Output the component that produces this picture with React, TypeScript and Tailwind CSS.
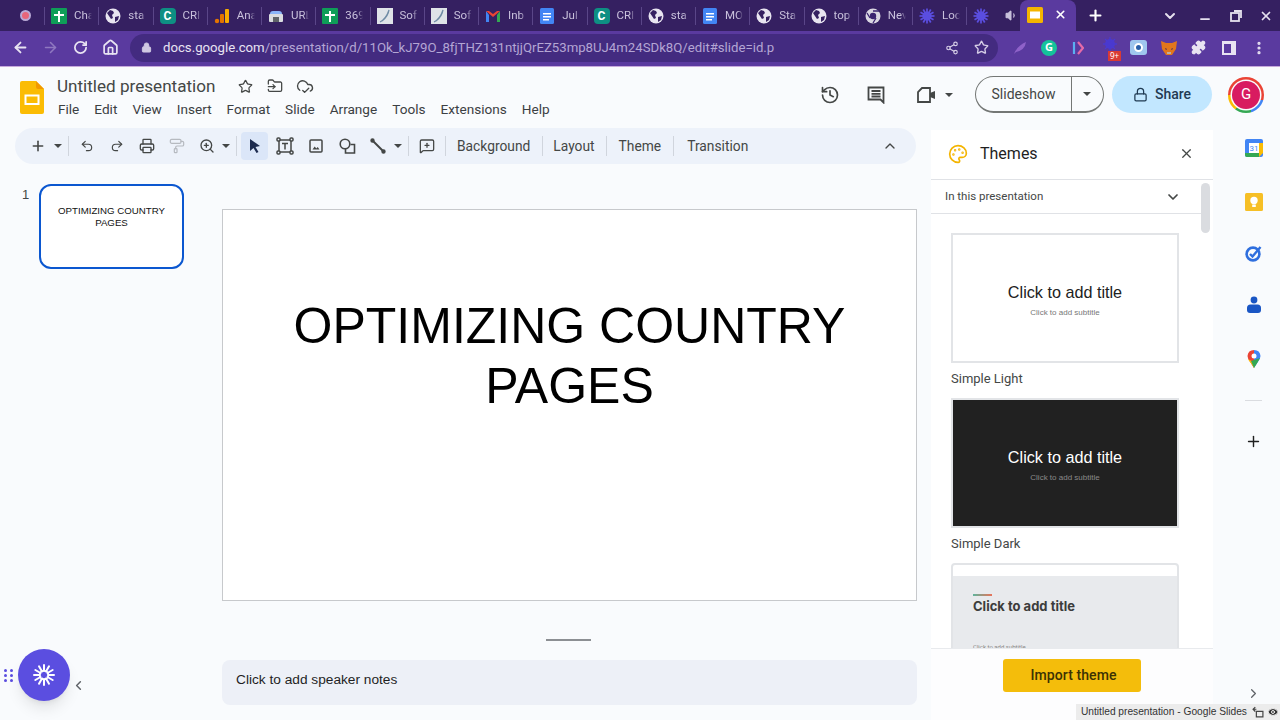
import { ReactNode } from 'react';
import {
  ArrowLeft,
  ArrowRight,
  RotateCw,
  Home,
  Lock,
  Share2,
  Star,
  Puzzle,
  MoreVertical,
  Plus,
  ChevronDown,
  ChevronUp,
  ChevronLeft,
  ChevronRight,
  X,
  Minus,
  Undo2,
  Redo2,
  Printer,
  PaintRoller,
  ZoomIn,
  MessageSquarePlus,
  History,
  Palette,
  FolderInput,
  CloudCheck,
  Volume1,
  Eye,
} from 'lucide-react';

const roboto = { fontFamily: 'Roboto, sans-serif' };

// tab favicons
const SheetIcon = () => (
  <svg width="16" height="16" viewBox="0 0 16 16">
    <rect width="16" height="16" rx="1" fill="#0f9d58" />
    <path d="M7 3h2v3h4v2H9v6H7V8H3V6h4z" fill="#fff" />
  </svg>
);
const GlobeIcon = () => (
  <svg width="16" height="16" viewBox="0 0 16 16">
    <circle cx="8" cy="8" r="7.5" fill="#e8e4f0" />
    <path d="M2 5l3-3 3 1 1 2-2 2 1 3-2 1-2-3zM10 9l4-1-1 4-3 2z" fill="#352061" />
  </svg>
);
const CIcon = () => (
  <span className="flex h-4 w-4 items-center justify-center rounded-sm bg-[#0e8f83] text-[12px] font-bold leading-none text-white">C</span>
);
const AnalyticsIcon = () => (
  <svg width="16" height="16" viewBox="0 0 16 16">
    <circle cx="3" cy="13" r="2.200" fill="#e37400" />
    <rect x="6" y="6" width="4" height="9" rx="1" fill="#e37400" />
    <rect x="11" y="1" width="4" height="14" rx="1" fill="#f9ab00" />
  </svg>
);
const UrlIcon = () => (
  <svg width="16" height="16" viewBox="0 0 16 16">
    <path d="M2 6q0-3 3-3h6q3 0 3 3z" fill="#8ab4f8" />
    <rect x="1" y="6" width="14" height="8" rx="1" fill="#dadce0" />
    <rect x="5" y="9" width="6" height="5" fill="#5f6368" />
  </svg>
);
const SoftIcon = () => (
  <svg width="16" height="16" viewBox="0 0 16 16">
    <rect width="16" height="16" fill="#dfe3e8" />
    <path d="M3 14Q9 11 12 2Q11 9 5 13" stroke="#6f8ba5" fill="none" strokeWidth="1.2" />
  </svg>
);
const GmailIcon = () => (
  <svg width="16" height="16" viewBox="0 0 16 16">
    <path d="M1 3v11h3V7z" fill="#4285f4" />
    <path d="M15 3v11h-3V7z" fill="#34a853" />
    <path d="M1 3l7 6 7-6-3 0-4 3-4-3z" fill="#ea4335" />
  </svg>
);
const DocsIcon = () => (
  <svg width="16" height="16" viewBox="0 0 16 16">
    <rect x="1" width="14" height="16" rx="1.5" fill="#4285f4" />
    <path d="M4 5h8v1.5H4zM4 8h8v1.5H4zM4 11h6v1.5H4z" fill="#fff" />
  </svg>
);
const ChromeIcon = () => (
  <svg width="16" height="16" viewBox="0 0 16 16">
    <circle cx="8" cy="8" r="7.5" fill="#d9d6e2" />
    <circle cx="8" cy="8" r="3.2" fill="#3a2470" />
    <path d="M8 3h6M5 10L2 5M11 10l-3 5" stroke="#3a2470" strokeWidth="1.3" />
  </svg>
);
const LocIcon = () => (
  <svg width="16" height="16" viewBox="0 0 16 16" fill="none">
    <circle cx="8" cy="8" r="4.6" fill="#5b4ee0" />
    {[0, 30, 60, 90, 120, 150].map((a) => (
      <path key={a} d="M8 0.5V15.5" stroke="#5b4ee0" strokeWidth="1.7" transform={`rotate(${a} 8 8)`} />
    ))}
  </svg>
);
const SlidesLogo = ({ size = 24 }: { size?: number }) => (
  <svg width={size} height={size * 1.375} viewBox="0 0 24 33">
    <path d="M2 0h14l8 8v23q0 2-2 2H2q-2 0-2-2V2q0-2 2-2z" fill="#fbbc04" />
    <path d="M16 0l8 8h-6q-2 0-2-2z" fill="#f29900" />
    <rect x="5.5" y="14.5" width="13" height="8.5" fill="none" stroke="#fff" strokeWidth="2" />
  </svg>
);

const tabs: { icon: ReactNode; label: string }[] = [
  { icon: <SheetIcon />, label: 'Cha' },
  { icon: <GlobeIcon />, label: 'sta' },
  { icon: <CIcon />, label: 'CRI' },
  { icon: <AnalyticsIcon />, label: 'Ana' },
  { icon: <UrlIcon />, label: 'URL' },
  { icon: <SheetIcon />, label: '369' },
  { icon: <SoftIcon />, label: 'Sof' },
  { icon: <SoftIcon />, label: 'Sof' },
  { icon: <GmailIcon />, label: 'Inb' },
  { icon: <DocsIcon />, label: 'Jul' },
  { icon: <CIcon />, label: 'CRI' },
  { icon: <GlobeIcon />, label: 'sta' },
  { icon: <DocsIcon />, label: 'MO' },
  { icon: <GlobeIcon />, label: 'Sta' },
  { icon: <GlobeIcon />, label: 'top' },
  { icon: <ChromeIcon />, label: 'Nev' },
  { icon: <LocIcon />, label: 'Loc' },
];

const TabStrip = () => (
  <div className="flex h-[31px] items-center bg-[#352061] text-[11.5px] text-[#c9c1dc]" style={roboto}>
    <div className="flex w-[44px] items-center justify-center pl-[7px]">
      <span className="block h-[11px] w-[11px] rounded-full border-2 border-[#b9a9d6] bg-[#e8657a]" />
    </div>
    {tabs.map((t, i) => (
      <div key={i} className="flex h-[18px] w-[54.25px] items-center gap-[7px] border-l border-[#5a4688] pl-[6px]">
        <span className="shrink-0">{t.icon}</span>
        <span className="w-[18px] overflow-hidden whitespace-nowrap [mask-image:linear-gradient(90deg,#000_70%,transparent)]">{t.label}</span>
      </div>
    ))}
    <div className="flex h-[18px] w-[54px] items-center gap-[16px] border-l border-[#5a4688] pl-[6px]">
      <LocIcon />
      <Volume1 size={13} className="text-[#c9c1dc]" fill="#c9c1dc" />
    </div>
    <div className="flex h-[31px] w-[56px] items-center gap-[11px] self-end rounded-t-lg bg-[#5a3a9f] pl-[7px] pb-[2px]">
      <svg width="16" height="16" viewBox="0 0 16 16" className="shrink-0">
        <rect width="16" height="16" rx="1.5" fill="#f4b400" />
        <rect x="3" y="4.5" width="10" height="7" fill="#fff" />
      </svg>
      <X size={13} strokeWidth={3} className="text-white" />
    </div>
    <Plus size={17} strokeWidth={3} className="ml-[11px] text-white" />
    <ChevronDown size={16} strokeWidth={3} className="ml-[58px] text-[#e5e0ee]" />
    <Minus size={14} strokeWidth={3} className="ml-[20px] mt-[6px] text-[#e5e0ee]" />
    <svg width="12" height="12" viewBox="0 0 12 12" fill="none" stroke="#e5e0ee" strokeWidth="1.8" className="ml-[18px]">
      <rect x="1" y="3" width="8" height="8" />
      <path d="M4 1h7v7" />
    </svg>
    <X size={14} strokeWidth={3} className="ml-[17px] text-[#e5e0ee]" />
  </div>
);

const AddressBar = () => (
  <div className="flex h-[35px] items-center bg-[#5a3a9f] pb-[2px] pl-[12px] text-[#e8e3f2]">
    <ArrowLeft size={17} strokeWidth={2.6} />
    <ArrowRight size={17} strokeWidth={2.2} className="ml-[13px] text-[#8f78c0]" />
    <RotateCw size={15} strokeWidth={2.8} className="ml-[14px]" />
    <Home size={17} strokeWidth={2.4} className="ml-[14px]" />
    <div className="ml-[11px] flex h-[28px] w-[868px] items-center rounded-full bg-[#432b80] pl-[11px]" style={roboto}>
      <Lock size={11} fill="#d0c8e2" className="text-[#d0c8e2]" />
      <span className="ml-[11px] text-[13.2px] whitespace-nowrap text-[#e8e3f2]">
        docs.google.com<span className="text-[#b4a6d4]">/presentation/d/11Ok_kJ79O_8fjTHZ131ntjjQrEZ53mp8UJ4m24SDk8Q/edit#slide=id.p</span>
      </span>
      <Share2 size={14} className="ml-auto text-[#d5cde6]" />
      <Star size={15} strokeWidth={2.2} className="ml-[15px] mr-[9px] text-[#d5cde6]" />
    </div>
    <div className="ml-[14px] flex items-center">
      <svg width="14" height="14" viewBox="0 0 14 14" className="ml-[1px]">
        <path d="M1 13Q4 5 13 1Q12 9 3 11" fill="#8f62c9" />
      </svg>
      <span className="ml-[14px] flex h-[16px] w-[16px] items-center justify-center rounded-full bg-[#15c39a] text-[11px] font-bold text-white">G</span>
      <svg width="12" height="16" viewBox="0 0 12 16" fill="none" strokeWidth="2.2" className="ml-[15px]">
        <path d="M2 2v12" stroke="#5ab0f0" />
        <path d="M6 2l5 6-5 6" stroke="#e56aa8" />
      </svg>
      <span className="relative ml-[18px] h-[22px] w-[22px]">
        <svg width="18" height="16" viewBox="0 0 18 16" className="absolute left-0 top-0">
          <circle cx="8" cy="7" r="5" fill="#4a3ad0" />
          <path d="M8 0v14M1 7h14M3 2l10 10M13 2L3 12" stroke="#4a3ad0" strokeWidth="1.3" />
        </svg>
        <span className="absolute bottom-[-2px] left-[6px] bg-[#d93a34] px-[2px] text-[8px] leading-[10px] text-white">9+</span>
      </span>
      <span className="ml-[6px] flex h-[15px] w-[17px] items-center justify-center rounded-[3px] bg-[#9fc6ee]">
        <span className="h-[9px] w-[9px] rounded-full border-2 border-white bg-[#2a5fa8]" />
      </span>
      <svg width="16" height="15" viewBox="0 0 16 15" className="ml-[14px]">
        <path d="M0 1l5 2h6l5-2-1 8-4 6H5L1 9z" fill="#e2761b" />
        <path d="M4 8l2 1-1 1zM12 8l-2 1 1 1z" fill="#352061" />
        <path d="M6 12h4v2H6z" fill="#c0ad9e" />
      </svg>
      <Puzzle size={15} fill="#e8e3f2" className="ml-[14px]" />
      <svg width="14" height="14" viewBox="0 0 14 14" fill="none" stroke="#e8e3f2" strokeWidth="2" className="ml-[16px]">
        <rect x="1" y="1" width="12" height="12" fill="#e8e3f2" />
        <rect x="2" y="3" width="7" height="9" fill="#5a3a9f" stroke="none" />
      </svg>
      <MoreVertical size={16} strokeWidth={2.8} className="ml-[15px]" />
    </div>
  </div>
);

const DocHeader = () => (
  <div className="flex h-[61px] bg-[#f9fbfd] pl-[20px]" style={roboto}>
    <div className="pt-[14px]">
      <SlidesLogo />
    </div>
    <div className="ml-[13px] pt-[7px]">
      <div className="flex items-center">
        <span className="text-[17.1px] leading-[24px] text-[#444746]">Untitled presentation</span>
        <Star size={15} strokeWidth={2} className="ml-[23px] text-[#444746]" />
        <FolderInput size={16} strokeWidth={1.9} className="ml-[14px] text-[#444746]" />
        <CloudCheck size={18} strokeWidth={1.8} className="ml-[13px] text-[#444746]" />
      </div>
      <nav className="mt-[-1px] flex gap-[15px] pl-[1px] text-[13.6px] leading-[24px] text-[#3c4043]">
        {['File', 'Edit', 'View', 'Insert', 'Format', 'Slide', 'Arrange', 'Tools', 'Extensions', 'Help'].map((m) => (
          <span key={m}>{m}</span>
        ))}
      </nav>
    </div>
    <div className="ml-auto flex items-center self-start pt-[9px] pr-[16px] text-[#444746]">
      <History size={20} strokeWidth={2} />
      <svg width="18" height="18" viewBox="0 0 18 18" fill="none" stroke="#444746" strokeWidth="1.8" className="ml-[27px]">
        <path d="M1.5 1.5h15v15l-3-3h-12z" />
        <path d="M4.5 5h9M4.5 7.8h9M4.5 10.5h9" />
      </svg>
      <svg width="20" height="18" viewBox="0 0 20 18" fill="none" stroke="#444746" strokeWidth="1.8" className="ml-[31px]">
        <path d="M6 2h8v14H2V6z" />
        <path d="M14 7l5-2v8l-5-2z" fill="#444746" stroke="none" />
      </svg>
      <svg width="8" height="4" viewBox="0 0 8 4" className="ml-[9px]"><path d="M0 0h8L4 4z" fill="#444746" /></svg>
      <div className="ml-[22px] flex h-[37px] w-[129px] items-center rounded-full border border-[#747775] border-b-2 text-[14px] text-[#444746]">
        <span className="w-[96px] border-r border-[#747775] text-center leading-[35px]">Slideshow</span>
        <svg width="8" height="4" viewBox="0 0 8 4" className="ml-[11px]"><path d="M0 0h8L4 4z" fill="#444746" /></svg>
      </div>
      <div className="ml-[8px] flex h-[37px] w-[100px] items-center justify-center gap-[7px] rounded-full bg-[#c2e7ff] text-[14px] font-medium text-[#1f3a52]">
        <Lock size={15} strokeWidth={2} />
        Share
      </div>
      <div className="ml-[16px] flex h-[36px] w-[36px] items-center justify-center rounded-full bg-[conic-gradient(#ea4335_0_30%,#4285f4_30%_45%,#34a853_45%_60%,#fbbc04_60%_75%,#ea4335_75%)]">
        <span className="flex h-[28px] w-[28px] items-center justify-center rounded-full bg-[#d81b60] text-[15px] text-white ring-[1.5px] ring-[#f9fbfd]">G</span>
      </div>
    </div>
  </div>
);

const Caret = ({ className = '' }: { className?: string }) => (
  <svg width="8" height="4" viewBox="0 0 8 4" className={className}>
    <path d="M0 0h8L4 4z" fill="#444746" />
  </svg>
);
const Sep = ({ className = '' }: { className?: string }) => <span className={`h-[20px] w-px bg-[#d0d5dd] ${className}`} />;
const Tool = ({ children, w = 30 }: { children: ReactNode; w?: number }) => (
  <span className="flex items-center justify-center text-[#444746]" style={{ width: w }}>
    {children}
  </span>
);

const Toolbar = () => (
  <div className="ml-[15px] flex h-[36px] w-[901px] items-center rounded-full bg-[#edf2fa] pl-[13px] text-[#444746]" style={roboto}>
    <Tool w={20}><Plus size={16} strokeWidth={2.4} /></Tool>
    <Tool w={20}><Caret /></Tool>
    <Sep />
    <span className="ml-[3px] flex">
      <Tool><Undo2 size={14} strokeWidth={2} /></Tool>
      <Tool><Redo2 size={14} strokeWidth={2} /></Tool>
      <Tool><Printer size={16} strokeWidth={2} /></Tool>
      <Tool><PaintRoller size={16} strokeWidth={1.8} className="text-[#b6bac0]" /></Tool>
      <Tool><ZoomIn size={16} strokeWidth={2} /></Tool>
    </span>
    <Caret />
    <Sep className="ml-[6px]" />
    <span className="ml-[4px] flex h-[28px] w-[27px] items-center justify-center rounded-[4px] bg-[#dbe6f8]">
      <svg width="14" height="16" viewBox="0 0 14 16"><path d="M2 1l10 7-4.5 1 3 5-2 1-3-5L2 13z" fill="#1d2b4f" /></svg>
    </span>
    <span className="ml-[2px] flex">
      <Tool>
        <svg width="18" height="18" viewBox="0 0 18 18" fill="none" stroke="#444746" strokeWidth="1.5">
          <rect x="3" y="3" width="12" height="12" />
          <rect x="1" y="1" width="3" height="3" rx="1" fill="#edf2fa" />
          <rect x="14" y="1" width="3" height="3" rx="1" fill="#edf2fa" />
          <rect x="1" y="14" width="3" height="3" rx="1" fill="#edf2fa" />
          <rect x="14" y="14" width="3" height="3" rx="1" fill="#edf2fa" />
          <path d="M6 6.5h6M9 6.5v6" />
        </svg>
      </Tool>
      <Tool w={32}>
        <svg width="14" height="14" viewBox="0 0 14 14">
          <rect x="1" y="1" width="12" height="12" rx="1" fill="none" stroke="#444746" strokeWidth="1.5" />
          <path d="M3.5 10.500l2.200-3 1.600 2 1.400-1.500 1.800 2.500z" fill="#444746" />
        </svg>
      </Tool>
      <Tool w={31}>
        <svg width="17" height="16" viewBox="0 0 17 16" fill="none" stroke="#444746" strokeWidth="1.6">
          <circle cx="6" cy="6" r="4.8" />
          <path d="M11.5 6.5H15.5V15H6.5V11" />
        </svg>
      </Tool>
      <Tool w={30}>
        <svg width="16" height="16" viewBox="0 0 16 16" fill="none" stroke="#444746" strokeWidth="2">
          <path d="M3 3l10 10" />
          <circle cx="2.5" cy="2.5" r="1.2" fill="#444746" />
          <circle cx="13.5" cy="13.5" r="1.2" fill="#444746" />
        </svg>
      </Tool>
    </span>
    <Caret className="ml-[1px]" />
    <Sep className="ml-[6px]" />
    <Tool w={36}><MessageSquarePlus size={16} strokeWidth={1.9} /></Tool>
    <Sep />
    <span className="ml-[11px] text-[13.8px]">Background</span>
    <Sep className="ml-[12px]" />
    <span className="ml-[10px] text-[13.8px]">Layout</span>
    <Sep className="ml-[11px]" />
    <span className="ml-[12px] text-[13.8px]">Theme</span>
    <Sep className="ml-[12px]" />
    <span className="ml-[13px] text-[13.8px]">Transition</span>
    <ChevronUp size={16} strokeWidth={2} className="ml-auto mr-[18px]" />
  </div>
);

const Filmstrip = () => (
  <div className="flex w-[222px] shrink-0 pl-[22px] pt-[20px]" style={{ fontFamily: '"Liberation Sans", sans-serif' }}>
    <span className="w-[17px] pt-[3px] text-[13px] leading-[16px] text-[#444746]">1</span>
    <div className="flex h-[85px] w-[145px] flex-col rounded-[12px] border-2 border-[#0b57d0] bg-white px-[8px] pt-[19px] text-center text-[9.7px] leading-[12px] text-[#111]">
      OPTIMIZING COUNTRY PAGES
    </div>
  </div>
);

const Canvas = () => (
  <div className="flex min-w-0 flex-1 flex-col pt-[45px]" style={{ fontFamily: '"Liberation Sans", sans-serif' }}>
    <div className="h-[392px] w-[695px] border border-[#c7c9cc] bg-white px-[20px] pt-[86px] text-center text-[50px] leading-[60px] text-[#000]">
      OPTIMIZING COUNTRY PAGES
    </div>
    <div className="mt-[38px] ml-[324px] h-[2px] w-[45px] bg-[#8c8f93]" />
    <div className="mt-[19px] flex h-[45px] w-[695px] items-center rounded-lg bg-[#edf0f7] pb-[5px] pl-[14px] text-[13.7px] text-[#1f1f1f]">
      Click to add speaker notes
    </div>
  </div>
);

const ThemeCard = ({ label, dark }: { label: string; dark?: boolean }) => (
  <div className="mb-[11px]">
    <div className={`flex h-[130px] w-[228px] flex-col items-center justify-center border-2 border-[#e2e4e7] pt-[3px] ${dark ? 'bg-[#212121] text-white' : 'bg-white text-[#212121]'}`} style={{ fontFamily: '"Liberation Sans", sans-serif' }}>
      <span className="text-[16.200px] leading-[20px]">Click to add title</span>
      <span className={`mt-[6px] text-[8px] leading-[10px] ${dark ? 'text-[#8a8a8a]' : 'text-[#777]'}`}>Click to add subtitle</span>
    </div>
    <div className="mt-[8px] text-[13px] leading-[16px] text-[#444746]">{label}</div>
  </div>
);

const ThemesPanel = () => (
  <aside className="mt-[2px] flex h-[590px] w-[282px] shrink-0 flex-col bg-white" style={roboto}>
    <div className="flex h-[50px] shrink-0 items-center border-b border-[#e0e2e6] pb-[2px] pl-[17px] pr-[19px]">
      <Palette size={20} strokeWidth={2} className="text-[#f4b400]" />
      <span className="ml-[12px] text-[16px] text-[#1f1f1f]">Themes</span>
      <X size={15} strokeWidth={2} className="ml-auto text-[#444746]" />
    </div>
    <div className="flex min-h-0 flex-1">
      <div className="flex min-w-0 flex-1 flex-col">
        <div className="flex h-[34px] shrink-0 items-center justify-between border-b border-[#e0e2e6] pl-[14px] pr-[20px] text-[11.5px] text-[#444746]">
          In this presentation
          <ChevronDown size={16} strokeWidth={2.6} />
        </div>
        <div className="min-h-0 flex-1 overflow-hidden pl-[20px] pt-[19px]">
          <ThemeCard label="Simple Light" />
          <ThemeCard label="Simple Dark" dark />
          <div className="h-[130px] w-[228px] overflow-hidden rounded-t-sm border-2 border-[#e2e4e7] bg-white">
            <div className="mt-[11px] h-full bg-[#e8eaed] pl-[20px] pt-[18px]">
              <div className="h-[2px] w-[19px] bg-[linear-gradient(90deg,#5fb49c,#e8735a)]" />
              <div className="mt-[1px] text-[13px] font-bold leading-[18px] text-[#3c3c3c]" style={{ fontFamily: 'Inter, sans-serif' }}>Click to add title</div>
              <div className="mt-[27px] text-[6px] text-[#888]">Click to add subtitle</div>
            </div>
          </div>
        </div>
      </div>
      <div className="w-[12px] shrink-0 pt-[3px]">
        <div className="h-[50px] w-[9px] rounded-full bg-[#dadce0]" />
      </div>
    </div>
    <div className="flex h-[72px] shrink-0 justify-center border-t border-[#e8eaed] bg-[#fdfdfe] pt-[10px]">
      <div className="flex h-[33px] w-[138px] items-center justify-center rounded-[3px] bg-[#f4bd0b] pl-[3px] text-[14px] tracking-[0.1px] font-medium text-[#3c3204]">
        Import theme
      </div>
    </div>
  </aside>
);

const Rail = () => (
  <div className="flex w-[67px] shrink-0 flex-col items-center pl-[14px] pt-[11px]">
    <svg width="18" height="18" viewBox="0 0 18 18">
      <rect width="18" height="18" rx="2" fill="#4285f4" />
      <path d="M4 4h10v10H4z" fill="#fff" />
      <path d="M0 14h14v4H2q-2 0-2-2z" fill="#34a853" />
      <path d="M14 4h4v10l-4 4z" fill="#fbbc04" />
      <text x="9" y="12" fontSize="8" textAnchor="middle" fill="#4285f4" fontFamily="Roboto">31</text>
    </svg>
    <svg width="18" height="18" viewBox="0 0 18 18" className="mt-[36px]">
      <rect width="18" height="18" rx="1.5" fill="#f6bf26" />
      <circle cx="9" cy="7.5" r="3.7" fill="#fff" />
      <rect x="7.2" y="11.5" width="3.6" height="2.5" fill="#fff" />
    </svg>
    <svg width="17" height="17" viewBox="0 0 17 17" fill="none" className="mt-[34px]">
      <circle cx="8" cy="9" r="6.4" stroke="#2f6fde" strokeWidth="2.6" />
      <path d="M5 9l2.5 2.5L15.5 2" stroke="#2f6fde" strokeWidth="2.4" />
    </svg>
    <svg width="14" height="18" viewBox="0 0 14 18" className="mt-[34px]">
      <circle cx="7" cy="4" r="3.4" fill="#1a56c4" />
      <path d="M0 12q0-3.5 3.5-3.5h7Q14 8.500 14 12v2q0 3-3 3H3q-3 0-3-3z" fill="#1a56c4" />
    </svg>
    <svg width="14" height="18" viewBox="0 0 14 18" className="mt-[36px]">
      <path d="M7 0Q1 0 .5 6q0 3 3 6.500L7 18z" fill="#ea4335" />
      <path d="M7 0q6 0 6.500 6 0 3-3 6.500L7 18z" fill="#4285f4" />
      <path d="M1 9q1 2 2.500 3.500L7 18l1-5z" fill="#fbbc04" />
      <path d="M7 18l3.500-5.500L13 8 4 11z" fill="#34a853" />
      <circle cx="7" cy="6" r="2.500" fill="#fff" />
    </svg>
    <div className="mt-[32px] h-px w-[17px] bg-[#dadce0]" />
    <Plus size={17} strokeWidth={2} className="mt-[32px] text-[#1f1f1f]" />
    <ChevronRight size={15} strokeWidth={2} className="mt-auto mb-[19px] text-[#5f6368]" />
  </div>
);

const FloatingWidget = () => (
  <div className="absolute left-[4px] top-[649px] flex items-center">
    <div className="grid w-[9px] grid-cols-2 gap-x-[2px] gap-y-[2px]">
      {[0, 1, 2, 3, 4, 5].map((d) => (
        <span key={d} className="h-[3px] w-[3px] rounded-full bg-[#5b4ee0]" />
      ))}
    </div>
    <div className="ml-[5px] flex h-[52px] w-[52px] items-center justify-center rounded-full bg-[#5b4ee0] shadow-lg">
      <svg width="22" height="22" viewBox="0 0 22 22" fill="none" stroke="#fff" strokeLinecap="round">
        {[0, 30, 60, 90, 120, 150].map((a) => (
          <g key={a} transform={`rotate(${a} 11 11)`}>
            <path d="M11 1V7M11 15V21" strokeWidth="2" />
          </g>
        ))}
        <circle cx="11" cy="11" r="4.400" strokeWidth="1.600" />
      </svg>
    </div>
    <ChevronLeft size={15} strokeWidth={2.4} className="ml-[1px] mt-[21px] text-[#5f6368]" />
  </div>
);

const StatusTip = () => (
  <div className="absolute bottom-0 right-0 flex h-[16px] w-[204px] items-center bg-[#ececec] pl-[5px] text-[10.2px] whitespace-nowrap text-[#333]" style={{ fontFamily: '"Liberation Sans", sans-serif' }}>
    Untitled presentation - Google Slides
    <svg width="12" height="12" viewBox="0 0 11 11" fill="none" stroke="#444" strokeWidth="1.1" className="ml-[5px]">
      <path d="M3 1L1 3l2 2M1 3h3M4 5h6v5H4z" />
    </svg>
    <Eye size={12} fill="#333" className="ml-[3px] text-[#ececec]" />
  </div>
);

export default function App() {
  return (
    <div className="relative flex h-[720px] w-[1280px] flex-col overflow-hidden bg-[#f9fbfd]">
      <TabStrip />
      <AddressBar />
      <div className="h-px bg-[#c7a9dc]" />
      <DocHeader />
      <div className="flex min-h-0 flex-1">
        <div className="flex w-[931px] shrink-0 flex-col">
          <Toolbar />
          <div className="flex min-h-0 flex-1">
            <Filmstrip />
            <Canvas />
          </div>
        </div>
        <ThemesPanel />
        <Rail />
      </div>
      <FloatingWidget />
      <StatusTip />
    </div>
  );
}
